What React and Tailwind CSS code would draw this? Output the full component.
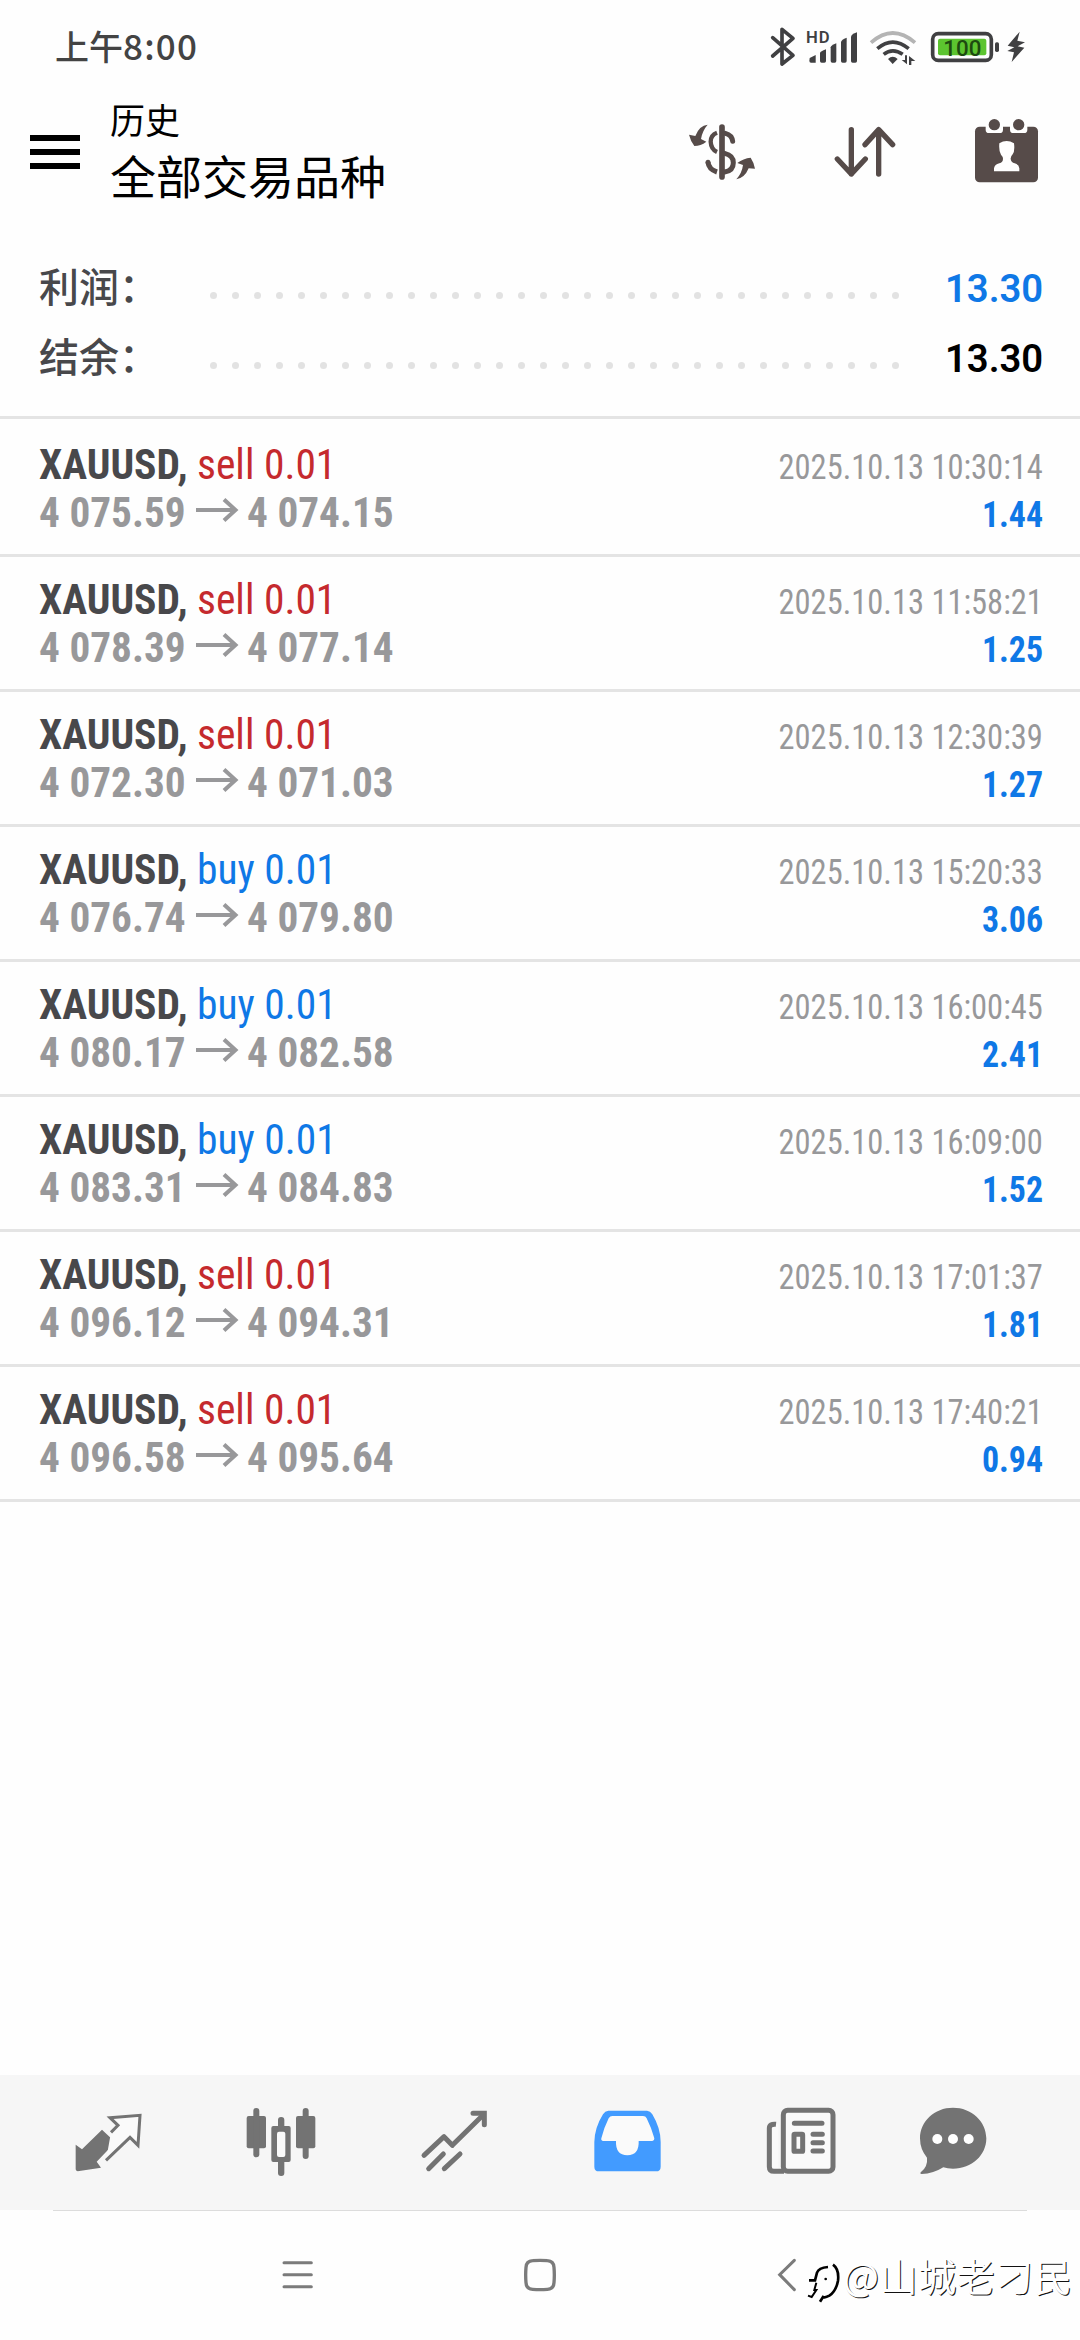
import React from 'react';

const deals = [
  { type: 'sell', open: '4 075.59', close: '4 074.15', time: '2025.10.13 10:30:14', profit: '1.44' },
  { type: 'sell', open: '4 078.39', close: '4 077.14', time: '2025.10.13 11:58:21', profit: '1.25' },
  { type: 'sell', open: '4 072.30', close: '4 071.03', time: '2025.10.13 12:30:39', profit: '1.27' },
  { type: 'buy', open: '4 076.74', close: '4 079.80', time: '2025.10.13 15:20:33', profit: '3.06' },
  { type: 'buy', open: '4 080.17', close: '4 082.58', time: '2025.10.13 16:00:45', profit: '2.41' },
  { type: 'buy', open: '4 083.31', close: '4 084.83', time: '2025.10.13 16:09:00', profit: '1.52' },
  { type: 'sell', open: '4 096.12', close: '4 094.31', time: '2025.10.13 17:01:37', profit: '1.81' },
  { type: 'sell', open: '4 096.58', close: '4 095.64', time: '2025.10.13 17:40:21', profit: '0.94' },
];

const StatusBar = () => (
  <div className="flex h-[98px] items-start justify-between pl-[55px] pr-[50px] pt-[22px] text-[#434343]">
    <div className="flex items-baseline font-['Noto_Sans_CJK_SC',sans-serif] font-medium leading-[46px]">
      <span className="text-[34px]">上午</span>
      <span className="text-[35px] tracking-[1.2px]">8:00</span>
    </div>
    <div className="flex">
      {/* bluetooth */}
      <svg className="h-[52px] w-[33px]" viewBox="324 66 99 156" fill="none" stroke="#404042" strokeWidth="11" strokeLinecap="round" strokeLinejoin="round">
        <path d="M338 113 L399 166 L366 192 V88 L399 115 L338 168" />
      </svg>
      {/* mobile signal */}
      <svg className="h-[52px] w-[63px]" viewBox="423 66 189 156" fill="#404042">
        <text x="438" y="129" fontFamily="Roboto, sans-serif" fontWeight="600" fontSize="50" letterSpacing="3">HD</text>
        <path d="M449 174 L467 165 V188 H453 Q448 188 448 182Z" />
        <path d="M480 159 Q481 154 498 148 V183 Q498 188 493 188 H485 Q480 188 480 183Z" />
        <path d="M512 142 Q513 136 529 130 V183 Q529 188 524 188 H517 Q512 188 512 183Z" />
        <path d="M543 126 Q544 119 560 113 V183 Q560 188 555 188 H548 Q543 188 543 183Z" />
        <path d="M573 110 Q574 103 591 97 V183 Q591 188 586 188 H578 Q573 188 573 183Z" />
      </svg>
      {/* wifi */}
      <svg className="h-[52px] w-[60px]" viewBox="612 66 180 156" fill="none" strokeWidth="11">
        <path d="M633 128 Q698 70 765 128" stroke="#b4b4b4" />
        <path d="M652 146 Q698 107 746 146" stroke="#404042" />
        <path d="M671 163 Q698 142 728 163" stroke="#404042" />
        <path d="M684 177 Q698 163 713 177 L698 192Z" fill="#404042" />
        <path d="M741 166 V193 L725 180 H735 V166Z M747 195 V168 L766 183 H754 V195Z" fill="#404042" />
      </svg>
      {/* battery */}
      <svg className="h-[52px] w-[79px]" viewBox="792 66 237 156">
        <rect x="818" y="101" width="176" height="80" rx="17" fill="none" stroke="#404042" strokeWidth="11" />
        <rect x="834" y="116" width="145" height="50" rx="6" fill="#5cc42f" />
        <rect x="1005" y="127" width="12" height="29" rx="5" fill="#404042" />
        <text x="850" y="167" fontFamily="Roboto, sans-serif" fontWeight="500" fontSize="67" fill="#1d4a10">100</text>
      </svg>
      <svg className="h-[52px] w-[27px]" viewBox="1029 66 81 156" fill="#404042">
        <path d="M1079 95 L1043 137 L1063 142 L1042 153 L1062 157 L1055 186 L1093 143 L1073 139 L1095 127 L1072 122Z" />
      </svg>
    </div>
  </div>
);

const Header = () => (
  <header className="flex h-[152px] items-start pl-[30px] pr-[38px]">
    <div className="mt-[37px] flex w-[50px] flex-col gap-[8px]">
      <span className="h-[6px] bg-black" />
      <span className="h-[6px] bg-black" />
      <span className="h-[6px] bg-black" />
    </div>
    <div className="ml-[30px] flex-1 font-['Noto_Sans_CJK_SC',sans-serif] text-black">
      <p className="text-[35px] leading-[42px]">历史</p>
      <h1 className="mt-[7px] text-[46px] leading-[54px]">全部交易品种</h1>
    </div>
    <div className="mt-4 flex gap-[70px]">
      <svg className="h-[72px] w-[76px]" viewBox="72 342 228 216" fill="none" stroke="#564b49" strokeWidth="15" strokeLinecap="round">
        <path d="M186 381 V531" strokeWidth="17" />
        <path d="M196 400 Q216 405 218 424" />
        <path d="M171 398 Q152 405 152 425 Q153 448 171 456" strokeWidth="13" strokeLinecap="butt" />
        <path d="M194 460 Q220 466 220 488 Q220 512 194 516" />
        <path d="M144 487 Q146 508 171 516" strokeLinecap="butt" />
        <circle cx="144" cy="487" r="7.5" fill="#564b49" stroke="none" />
        <path d="M143 374 Q118 376 106 408 L87 404 Q92 424 103 438 Q122 438 139 425 L123 417 Q127 392 143 374Z" fill="#564b49" stroke="none" />
        <path d="M229 538 Q254 534 266 505 L285 506 Q281 486 272 473 Q250 475 232 489 L249 495 Q246 519 229 538Z" fill="#564b49" stroke="none" />
      </svg>
      <svg className="h-[72px] w-[70px]" viewBox="510 342 210 216" fill="none" stroke="#564b49" strokeWidth="16" strokeLinecap="round" strokeLinejoin="round">
        <path d="M574 389 V522 M532 477 L574 522 L616 477" />
        <path d="M656 522 V389 M615 434 L656 389 L698 434" />
      </svg>
      <svg className="h-[72px] w-[72px]" viewBox="930 342 216 216" fill="#564b49">
        <rect x="945" y="380" width="189" height="167" rx="14" />
        <rect x="977" y="362" width="52" height="37" rx="10" fill="#fff" />
        <rect x="1050" y="362" width="52" height="37" rx="10" fill="#fff" />
        <circle cx="1003" cy="374" r="17" />
        <circle cx="1076" cy="374" r="17" />
        <path d="M1002 514 V505 Q1004 493 1018 490 Q1029 487 1029 476 Q1029 470 1023 464 Q1016 454 1018 430 Q1040 416 1062 430 Q1065 454 1058 463 Q1051 470 1052 477 Q1053 487 1064 490 Q1077 494 1078 505 V514Z" fill="#fff" />
      </svg>
    </div>
  </header>
);

const SummaryRow = ({ label, value, valueClass }) => (
  <div className="flex h-[70px] items-baseline">
    <span className="w-[171px] font-['Noto_Sans_CJK_SC',sans-serif] text-[40px] font-medium leading-[70px] text-[#48484b]">{label}</span>
    <div className="flex w-[689px] justify-between self-center pt-[21px]">
      {Array.from({ length: 32 }).map((_, i) => (
        <span key={i} className="size-[7px] rounded-full bg-[#e2e2e2]" />
      ))}
    </div>
    <span className={`ml-auto origin-right scale-x-[0.98] font-['Roboto',sans-serif] text-[39px] font-semibold ${valueClass}`}>{value}</span>
  </div>
);

const DealRow = ({ deal }) => (
  <li className="h-[135px] border-b-[3px] border-[#e4e4e4] pl-[39px] pr-[37px] pt-[18px] font-['Roboto_Condensed','Roboto',sans-serif]">
    <div className="flex h-12 items-baseline justify-between leading-[48px]">
      <p className="flex items-baseline text-[43px]">
        <span className="w-[158px] origin-left scale-x-[0.966] font-bold text-[#48484b]">XAUUSD,</span>
        <span className={`origin-left scale-x-[0.965] ${deal.type === 'sell' ? 'text-[#c52a2e]' : 'text-[#0f78e6]'}`}>{deal.type} 0.01</span>
      </p>
      <span className="origin-right scale-x-[0.915] text-[35.5px] text-[#98989a]">{deal.time}</span>
    </div>
    <div className="flex h-12 items-baseline justify-between leading-[48px]">
      <p className="flex items-baseline text-[43px] font-bold text-[#98989a]">
        <span className="w-[157px] origin-left scale-x-[0.96]">{deal.open}</span>
        <svg className="mr-[8px] mt-[-4px] h-[24px] w-[43px] self-center" viewBox="0 0 43 24" fill="none" stroke="#98989a" strokeWidth="4">
          <path d="M0 12 H40 M28 1.500 L39.500 12 L28 22.500" />
        </svg>
        <span className="origin-left scale-x-[0.96]">{deal.close}</span>
      </p>
      <span className="origin-right scale-x-[0.94] text-[36px] font-bold text-[#0f78e6]">{deal.profit}</span>
    </div>
  </li>
);

const TabBar = () => (
  <nav className="flex h-[135px] items-start gap-[101px] bg-[#f6f6f6] pl-[72px] pt-[31px]">
    {/* quotes */}
    <svg className="size-[72px]" viewBox="216 138 216 216" fill="#737373">
      <path d="M306 209 L346 247 L290 305 L303 323 L233 334 Q227 333 227 328 V254 L246 268Z" />
      <path d="M333 217 L354 196 L330 173 L420 166 L414 256 L390 232 L318 301" fill="#fafafa" stroke="#737373" strokeWidth="9" />
    </svg>
    {/* charts */}
    <svg className="size-[72px]" viewBox="735 138 216 216" fill="#737373">
      <rect x="740" y="168" width="58" height="97" rx="6" />
      <rect x="760" y="144" width="18" height="148" rx="9" />
      <rect x="814" y="198" width="58" height="108" rx="6" />
      <rect x="834" y="171" width="19" height="177" rx="9" />
      <rect x="831" y="215" width="25" height="76" rx="6" fill="#fafafa" />
      <rect x="888" y="168" width="58" height="97" rx="6" />
      <rect x="908" y="144" width="18" height="153" rx="9" />
    </svg>
    {/* trade */}
    <svg className="size-[72px]" viewBox="174 138 216 216" fill="none" stroke="#737373" strokeWidth="15" strokeLinecap="round">
      <path d="M192 286 L252 230 L277 256 L370 164" strokeLinejoin="round" />
      <path d="M339 160 H373 V194" />
      <path d="M206 326 L250 282 M253 326 L300 282" />
    </svg>
    {/* history */}
    <svg className="ml-px size-[72px]" viewBox="696 138 216 216" fill="#429bff">
      <path d="M745 152 H861 Q871 153 877 163 Q902 205 902 246 V320 Q902 334 888 334 H717 Q703 334 703 320 V246 Q704 203 729 163 Q735 153 745 152Z" />
      <path d="M757 168 H849 Q857 168 860 175 Q874 203 883 235 Q884 242 877 243 H836 Q838 285 802 286 Q766 285 768 243 H730 Q722 242 724 235 Q732 203 746 175 Q750 168 757 168Z" fill="#fafafa" />
    </svg>
    {/* news */}
    <svg className="size-[72px]" viewBox="135 138 216 216" fill="none" stroke="#737373" strokeWidth="15">
      <path d="M160 194 H175 V330 H155 V194Z" fill="#fafafa" stroke="none" />
      <path d="M168 193 Q148 191 148 205 V320 Q148 334 162 334 H192" />
      <rect x="190" y="151" width="149" height="183" rx="13" fill="#fafafa" />
      <path d="M223 190 H306 M279 223 H307 M279 248 H307 M279 273 H307" strokeLinecap="round" />
      <rect x="222" y="223" width="26" height="51" rx="2" />
    </svg>
    {/* messages */}
    <svg className="-ml-[21px] size-[72px]" viewBox="591 138 216 216" fill="#737373">
      <path d="M699 143 C755 143 799 184 799 235 C799 286 755 326 699 326 Q682 326 670 322 Q640 341 605 342 Q598 341 603 336 Q624 319 621 293 Q600 268 600 235 C600 184 643 143 699 143Z" />
      <circle cx="652" cy="237" r="15" fill="#fff" />
      <circle cx="699" cy="237" r="15" fill="#fff" />
      <circle cx="746" cy="237" r="15" fill="#fff" />
    </svg>
  </nav>
);

const SystemNav = () => (
  <div className="flex h-[130px] flex-col px-[53px]">
    <div className="h-px bg-[#dcdcdc]" />
    <div className="flex items-center pt-[46px]">
      <svg className="ml-[227px] size-9" viewBox="178 111 108 108" stroke="#7b7b7b" strokeWidth="9" strokeLinecap="round">
        <path d="M190 128 H272 M190 164 H272 M190 200 H272" />
      </svg>
      <svg className="ml-[206px] size-9" viewBox="906 111 108 108" fill="none" stroke="#7b7b7b" strokeWidth="10">
        <path d="M938 122 Q960 120 982 122 Q1001 123 1002 142 Q1004 165 1002 188 Q1001 207 982 208 Q960 210 938 208 Q919 207 918 188 Q916 165 918 142 Q919 123 938 122Z" />
      </svg>
      <svg className="ml-[208px] size-9" viewBox="78 111 108 108" fill="none" stroke="#7b7b7b" strokeWidth="9" strokeLinecap="round">
        <path d="M163 121 L119 164 L163 209" />
      </svg>
    </div>
  </div>
);

const Watermark = () => (
  <div className="absolute left-[806px] top-[2255px] flex">
    <svg className="mt-[5px] h-[46px] w-[37px]" viewBox="198 122 111 138" fill="none" stroke="#000" strokeWidth="8">
      <path d="M207 183 H225 L231 160 Q236 145 264 143" />
      <path d="M229 190 L223 212 H229 L215 233 L204 229" strokeWidth="6" />
      <path d="M279 136 Q298 150 294 184 Q288 216 268 229 Q256 236 249 233 L240 247" />
      <circle cx="257" cy="179" r="4" fill="#000" stroke="none" />
    </svg>
    <span className="font-['Noto_Sans_CJK_SC',sans-serif] text-[38px] leading-[40px] tracking-[0.6px] text-white [text-shadow:1px_1px_0_#111]">@山城老刁民</span>
  </div>
);

export default function App() {
  return (
    <div className="relative flex h-[2340px] w-[1080px] flex-col overflow-hidden bg-[#fefefe]">
      <StatusBar />
      <Header />
      <section className="h-[166px] pl-[39px] pr-[37px]">
        <SummaryRow label="利润：" value="13.30" valueClass="text-[#0f78e6]" />
        <SummaryRow label="结余：" value="13.30" valueClass="text-black" />
      </section>
      <ul className="flex-1 border-t-[3px] border-[#e4e4e4] pt-[3px]">
        {deals.map((deal) => (
          <DealRow key={deal.time} deal={deal} />
        ))}
      </ul>
      <TabBar />
      <SystemNav />
      <Watermark />
    </div>
  );
}
